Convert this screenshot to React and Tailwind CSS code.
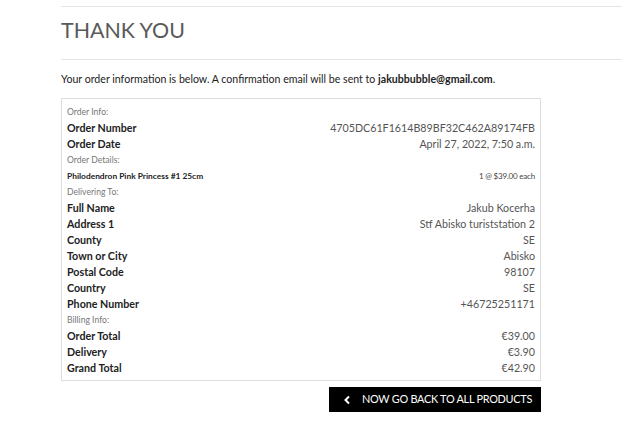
import React from 'react';

const rows = [
    { type: 'section', label: 'Order Info:' },
    { label: 'Order Number', value: '4705DC61F1614B89BF32C462A89174FB' },
    { label: 'Order Date', value: 'April 27, 2022, 7:50 a.m.' },
    { type: 'section', label: 'Order Details:' },
    { type: 'item', label: 'Philodendron Pink Princess #1 25cm', value: '1 @ $39.00 each' },
    { type: 'section', label: 'Delivering To:' },
    { label: 'Full Name', value: 'Jakub Kocerha' },
    { label: 'Address 1', value: 'Stf Abisko turiststation 2' },
    { label: 'County', value: 'SE' },
    { label: 'Town or City', value: 'Abisko' },
    { label: 'Postal Code', value: '98107' },
    { label: 'Country', value: 'SE' },
    { label: 'Phone Number', value: '+46725251171' },
    { type: 'section', label: 'Billing Info:' },
    { label: 'Order Total', value: '€39.00' },
    { label: 'Delivery', value: '€3.90' },
    { label: 'Grand Total', value: '€42.90' },
];

const Row = ({ row }) => {
    if (row.type === 'section') {
        return (
            <div className="h-4 flex items-center text-[8.6px] text-[#777]">{row.label}</div>
        );
    }
    if (row.type === 'item') {
        return (
            <div className="h-4 flex items-center justify-between">
                <span className="text-[8.4px] font-bold text-[#222]">{row.label}</span>
                <span className="text-[8px] text-[#444] tracking-tight">{row.value}</span>
            </div>
        );
    }
    return (
        <div className="h-4 flex items-center justify-between">
            <span className="text-[10.7px] font-bold text-[#222]">{row.label}</span>
            <span className="text-[10.7px] text-[#555]">{row.value}</span>
        </div>
    );
};

const App = () => {
    return (
        <div className="bg-white w-[622px] h-[447px] pl-[61px] pt-[6px] font-['Lato',sans-serif]">
            <div className="border-t border-[#e5e5e5]">
                {/* Heading */}
                <h1 className="h-[52px] pt-[11px] text-[21.4px] leading-[24px] text-[#5a5a5a]">
                    THANK YOU
                </h1>
                <div className="border-t border-[#e5e5e5]" />
                <p className="mt-[11px] text-[10.6px] leading-4 text-[#222]">
                    Your order information is below. A confirmation email will be sent to{' '}
                    <strong className="font-bold">jakubbubble@gmail.com</strong>.
                </p>

                {/* Order box */}
                <div className="mt-[11px] w-[480px] border border-[#ddd] px-[5px] pt-[5px] pb-[4px]">
                    {rows.map((row, i) => (
                        <Row key={i} row={row} />
                    ))}
                </div>

                <div className="w-[480px] flex justify-end mt-[6px]">
                    <button className="h-[25px] w-[212px] bg-black text-white flex items-center pl-[14px] text-[10.9px] uppercase whitespace-nowrap tracking-tight">
                        <svg width="9" height="10" viewBox="0 0 9 10">
                            <path d="M6 1.5 L2.5 5 L6 8.5" stroke="white" strokeWidth="2" fill="none" />
                        </svg>
                        <span className="ml-[10px]">Now go back to all products</span>
                    </button>
                </div>
            </div>
        </div>
    );
};

export default App;
